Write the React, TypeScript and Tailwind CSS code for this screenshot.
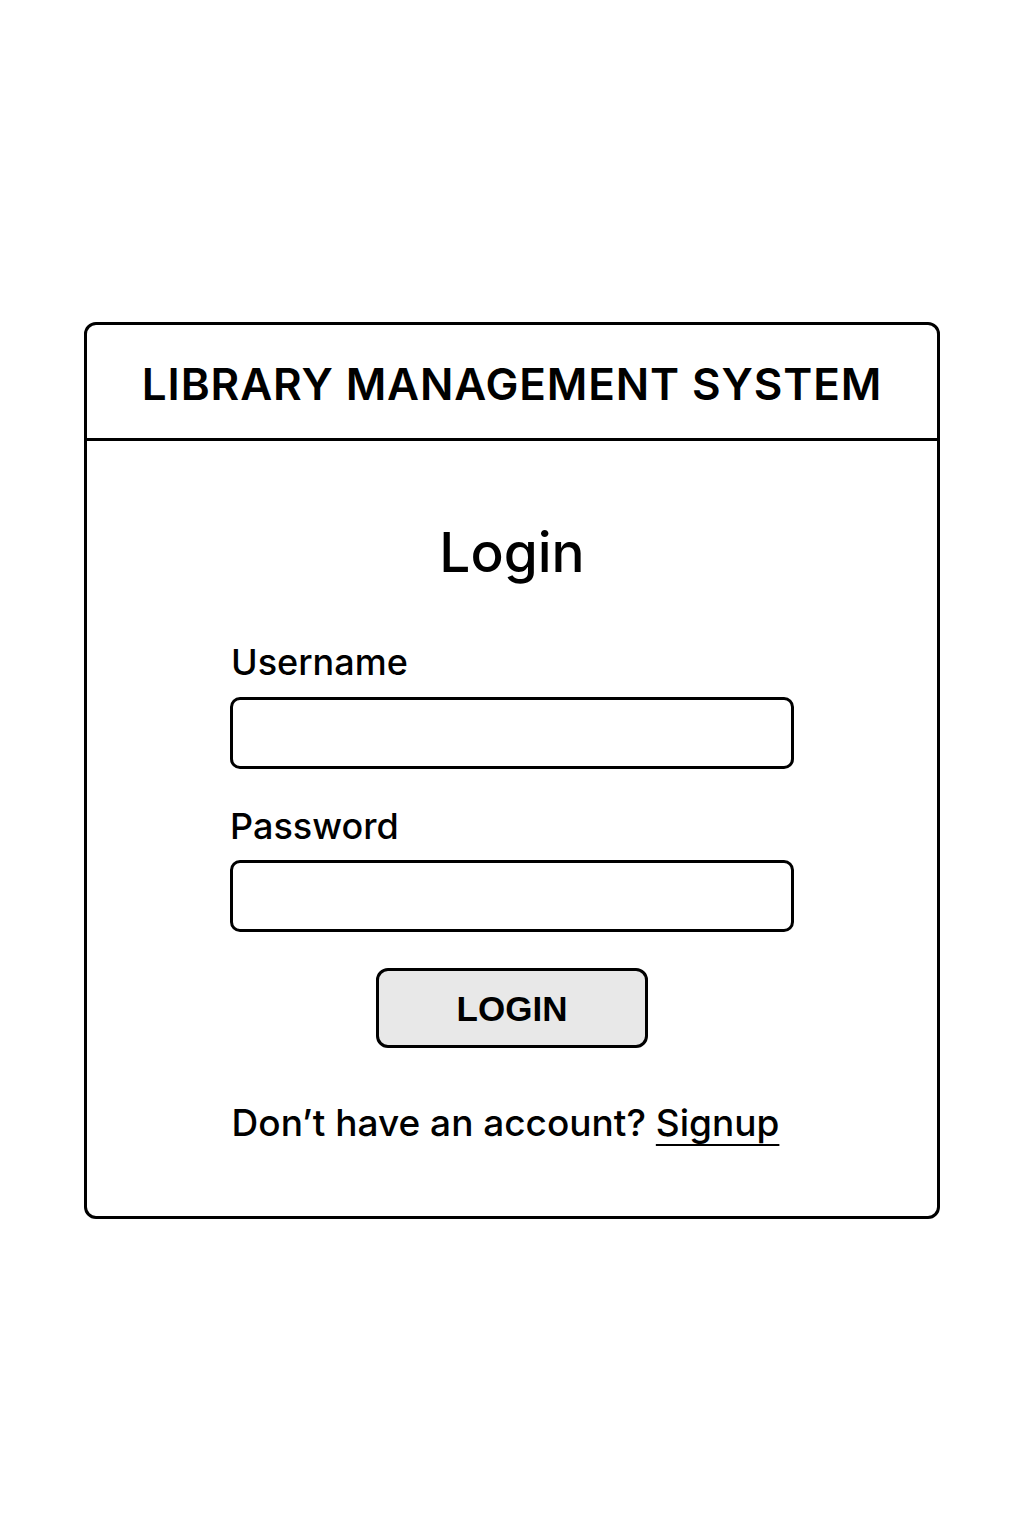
import React from 'react';

export default function App() {
  return (
    <div className="min-h-[1536px] bg-white pt-[322px] font-['Inter',sans-serif] text-black">
      <div className="mx-auto w-[856px] h-[897px] rounded-[12px] border-[3px] border-black flex flex-col">
        <div className="h-[116px] pt-[5px] border-b-[3px] border-black flex items-center justify-center">
          <h1 className="text-[44px] font-semibold tracking-[0.02em] leading-none">
            LIBRARY MANAGEMENT SYSTEM
          </h1>
        </div>
        <div className="flex flex-col items-center pt-[84px]">
          <h2 className="text-[55px] font-medium leading-none">Login</h2>
          <form className="w-[564px] mt-[64px] flex flex-col">
            <label className="text-[36px] font-medium leading-none ml-[1px]">Username</label>
            <input
              type="text"
              className="mt-[17px] h-[72px] rounded-[10px] border-[3px] border-black bg-white"
            />
            <label className="mt-[39px] text-[36px] font-medium leading-none">Password</label>
            <input
              type="password"
              className="mt-[16px] h-[72px] rounded-[10px] border-[3px] border-black bg-white"
            />
            <button
              type="button"
              className="mt-[36px] self-center w-[272px] h-[80px] rounded-[12px] border-[3px] border-black bg-[#e8e8e8] font-['Liberation_Sans',sans-serif] font-bold text-[35px] leading-none"
            >
              LOGIN
            </button>
          </form>
          <p className="mt-[56px] mr-[13px] text-[37px] font-medium leading-none">
            Don’t have an account?{' '}
            <a
              href="#"
              className="underline underline-offset-[8px] decoration-2 [text-decoration-skip-ink:none]"
            >
              Signup
            </a>
          </p>
        </div>
      </div>
    </div>
  );
}
